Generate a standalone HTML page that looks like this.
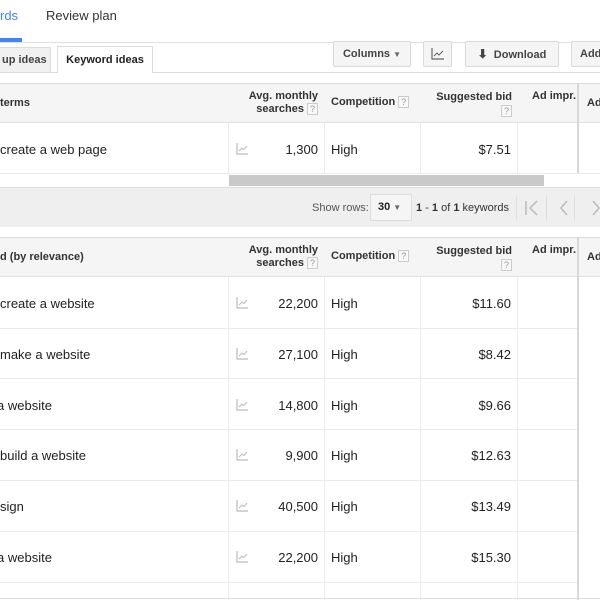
<!DOCTYPE html>
<html><head><meta charset="utf-8"><style>
*{margin:0;padding:0;box-sizing:border-box}
body{width:600px;height:600px;overflow:hidden;background:#fff;font-family:"Liberation Sans",Arial,sans-serif;color:#222;position:relative}
.a{position:absolute}
.hb{font-weight:bold;font-size:11px;color:#333}
.q{display:inline-block;width:11px;height:12px;border:1px solid #ccc;background:#f8f8f8;color:#999;font-size:9px;text-align:center;line-height:10px;font-weight:normal;vertical-align:middle}
.btn{position:absolute;border:1px solid #d9d9d9;background:#f5f5f5;border-radius:2px;font-weight:bold;font-size:11px;color:#444;height:26px;line-height:24px;text-align:center}
.t{font-size:13px}
.vl{position:absolute;width:1px;background:#ebebeb}
.hl{position:absolute;height:1px;background:#ebebeb;left:0;width:600px}
</style></head><body>
<div class="a" style="left:0;top:8px;font-size:13px;color:#4285f4">rds</div>
<div class="a" style="left:46px;top:8px;font-size:13px;color:#333">Review plan</div>
<div class="a" style="left:0;top:38px;width:22px;height:4px;background:#4285f4"></div>
<div class="a" style="left:0;top:42px;width:600px;height:1px;background:#e0e0e0"></div>
<div class="a" style="left:-2px;top:47px;width:53px;height:26px;background:#f1f1f1;border:1px solid #dcdcdc;font-weight:bold;font-size:11px;color:#444;line-height:24px;padding-left:3px">up ideas</div>
<div class="a" style="left:57px;top:46px;width:96px;height:27px;background:#fff;border:1px solid #dcdcdc;border-bottom:none;font-weight:bold;font-size:11px;color:#222;line-height:26px;text-align:center">Keyword ideas</div>
<div class="a" style="left:0;top:72px;width:57px;height:1px;background:#dcdcdc"></div>
<div class="a" style="left:153px;top:72px;width:447px;height:1px;background:#dcdcdc"></div>
<div class="btn" style="left:333px;top:41px;width:78px">Columns <span style="font-size:8px;color:#666">▼</span></div>
<div class="btn" style="left:423px;top:41px;width:29px"><svg width="14" height="12" viewBox="0 0 14 12" style="margin-top:6px"><path d="M1 0V11H13" stroke="#666" fill="none" stroke-width="1.2"/><path d="M3 8L6 5L8 7L12 3" stroke="#666" fill="none" stroke-width="1"/></svg></div>
<div class="btn" style="left:465px;top:41px;width:94px"><span style="font-size:12px">⬇</span>&nbsp; Download</div>
<div class="btn" style="left:571px;top:41px;width:40px;text-align:left;padding-left:8px">Add</div>

<div class="a" style="left:0;top:83px;width:600px;height:40px;background:#f5f5f5;border-top:1px solid #dcdcdc;border-bottom:1px solid #e3e3e3"></div>
<div class="a hb" style="left:0;top:97px">terms</div>
<div class="a hb" style="left:230px;top:90px;width:88px;text-align:right;line-height:13px">Avg. monthly<br>searches <span class="q">?</span></div>
<div class="a hb" style="left:331px;top:96px">Competition <span class="q">?</span></div>
<div class="a hb" style="left:420px;top:90px;width:92px;text-align:right;line-height:14px">Suggested bid<br><span class="q">?</span></div>
<div class="a hb" style="left:532px;top:90px">Ad impr.</div>
<div class="a hb" style="left:587px;top:97px">Ad</div>
<div class="a t" style="left:0;top:142px">create a web page</div>
<svg class="a" style="left:236px;top:143px" width="13" height="12" viewBox="0 0 13 12"><path d="M1 0V11H12" stroke="#bbb" fill="none" stroke-width="1.2"/><path d="M3 8L6 5L8 6.5L11 3" stroke="#bbb" fill="none"/></svg>
<div class="a t" style="left:250px;top:142px;width:68px;text-align:right">1,300</div>
<div class="a t" style="left:331px;top:142px">High</div>
<div class="a t" style="left:420px;top:142px;width:91px;text-align:right">$7.51</div>
<div class="vl" style="left:228px;top:123px;height:50px"></div>
<div class="vl" style="left:324px;top:123px;height:50px"></div>
<div class="vl" style="left:420px;top:123px;height:50px"></div>
<div class="vl" style="left:517px;top:123px;height:50px"></div>
<div class="vl" style="left:577px;top:83px;height:90px;background:#d8d8d8;width:2px"></div>
<div class="hl" style="top:173px"></div>
<div class="a" style="left:229px;top:175px;width:315px;height:11px;background:#c9c9c9"></div>
<div class="a" style="left:0;top:187px;width:600px;height:40px;background:#efefef;border-top:1px solid #ddd"></div>
<div class="a" style="left:312px;top:202px;font-size:11px;color:#555">Show rows:</div>
<div class="a" style="left:370px;top:194px;width:42px;height:27px;border:1px solid #ddd;background:#f5f5f5;border-radius:2px;font-weight:bold;font-size:11px;line-height:25px;padding-left:7px">30 <span style="font-size:8px;color:#666">▼</span></div>
<div class="a" style="left:416px;top:202px;font-size:11px;color:#333"><b>1</b> - <b>1</b> of <b>1</b> keywords</div>
<div class="a" style="left:516px;top:196px;width:1px;height:24px;background:#ddd"></div>
<svg class="a" style="left:524px;top:200px" width="16" height="16" viewBox="0 0 16 16"><path d="M2 1V15M13 1L6 8L13 15" stroke="#bbb" fill="none" stroke-width="1.5"/></svg>
<div class="a" style="left:546px;top:196px;width:1px;height:24px;background:#ddd"></div>
<svg class="a" style="left:558px;top:200px" width="12" height="16" viewBox="0 0 12 16"><path d="M9 1L3 8L9 15" stroke="#bbb" fill="none" stroke-width="1.5"/></svg>
<div class="a" style="left:574px;top:196px;width:1px;height:24px;background:#ddd"></div>
<svg class="a" style="left:590px;top:200px" width="12" height="16" viewBox="0 0 12 16"><path d="M3 1L9 8L3 15" stroke="#bbb" fill="none" stroke-width="1.5"/></svg>

<div class="a" style="left:0;top:237px;width:600px;height:40px;background:#f5f5f5;border-top:1px solid #dcdcdc;border-bottom:1px solid #e3e3e3"></div>
<div class="a hb" style="left:0;top:251px">d (by relevance)</div>
<div class="a hb" style="left:230px;top:244px;width:88px;text-align:right;line-height:13px">Avg. monthly<br>searches <span class="q">?</span></div>
<div class="a hb" style="left:331px;top:250px">Competition <span class="q">?</span></div>
<div class="a hb" style="left:420px;top:244px;width:92px;text-align:right;line-height:14px">Suggested bid<br><span class="q">?</span></div>
<div class="a hb" style="left:532px;top:244px">Ad impr.</div>
<div class="a hb" style="left:587px;top:251px">Ad</div>
<div class="vl" style="left:577px;top:237px;height:363px;background:#d8d8d8;width:2px"></div>

<div id="rows"></div>
<script>
var d=[["create a website","22,200","$11.60"],["make a website","27,100","$8.42"],["a website","14,800","$9.66"],["build a website","9,900","$12.63"],["sign","40,500","$13.49"],["a website","22,200","$15.30"]];
var h="";
for(var i=0;i<6;i++){var y=277+i*50.8,ty=Math.round(y+19);
h+='<div class="a t" style="left:'+(i==2||i==5?-3:0)+'px;top:'+ty+'px">'+d[i][0]+'</div>';
h+='<svg class="a" style="left:236px;top:'+(ty+1)+'px" width="13" height="12" viewBox="0 0 13 12"><path d="M1 0V11H12" stroke="#bbb" fill="none" stroke-width="1.2"/><path d="M3 8L6 5L8 6.5L11 3" stroke="#bbb" fill="none"/></svg>';
h+='<div class="a t" style="left:250px;top:'+ty+'px;width:68px;text-align:right">'+d[i][1]+'</div>';
h+='<div class="a t" style="left:331px;top:'+ty+'px">High</div>';
h+='<div class="a t" style="left:420px;top:'+ty+'px;width:91px;text-align:right">'+d[i][2]+'</div>';
h+='<div class="hl" style="top:'+Math.round(y+50.5)+'px;width:577px"></div>';}
h+='<div class="vl" style="left:228px;top:277px;height:323px"></div><div class="vl" style="left:324px;top:277px;height:323px"></div><div class="vl" style="left:420px;top:277px;height:323px"></div><div class="vl" style="left:517px;top:277px;height:323px"></div>';
h+='<div class="hl" style="top:598px;background:#ddd"></div>';
document.getElementById("rows").innerHTML=h;
</script>
</body></html>
